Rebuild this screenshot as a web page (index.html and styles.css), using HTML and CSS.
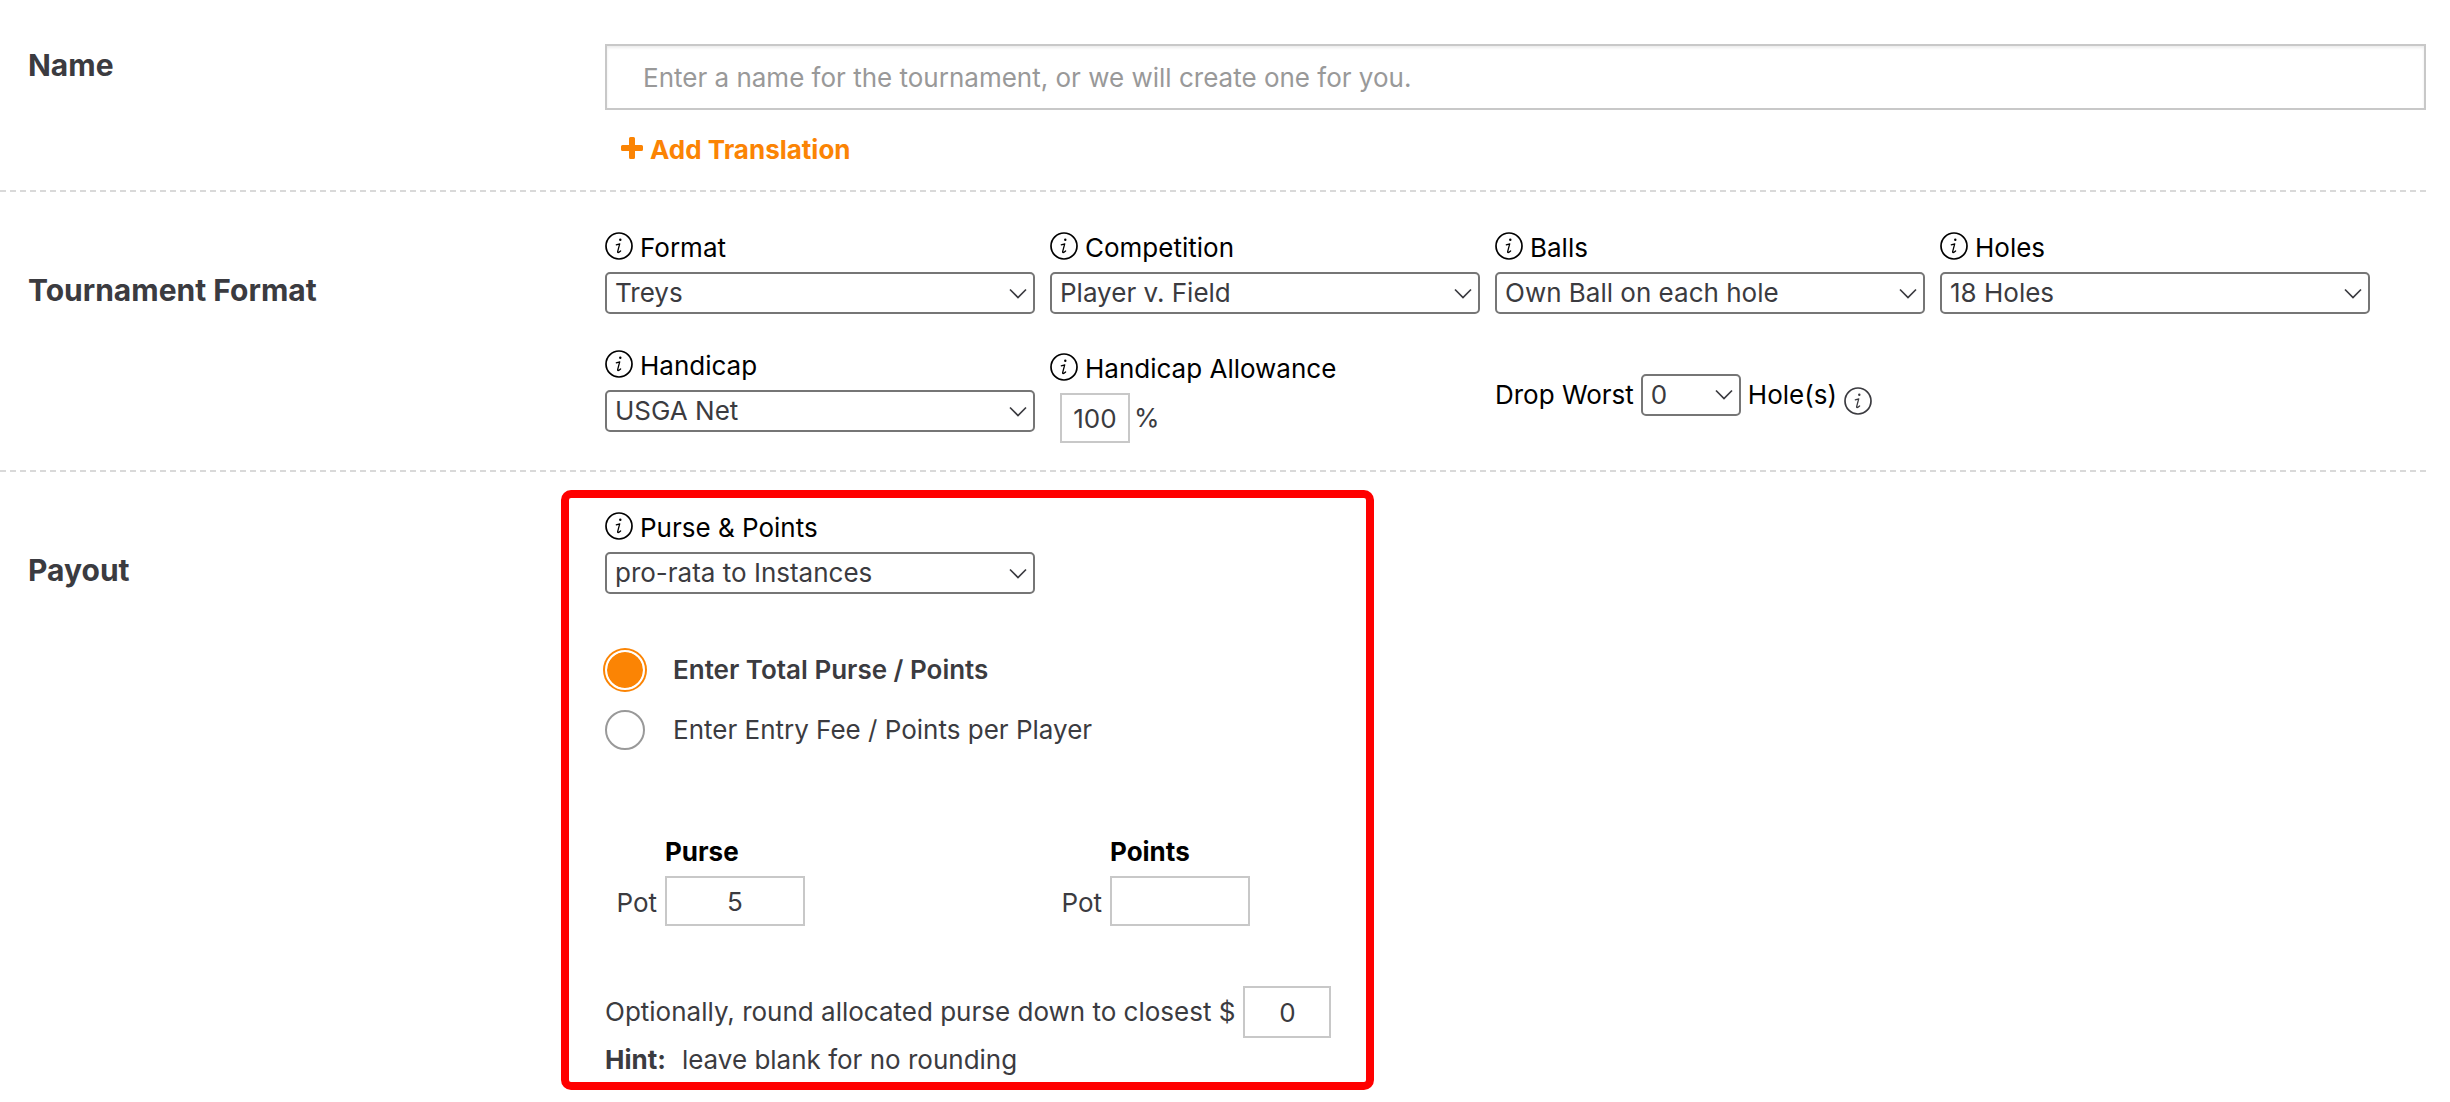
FILE: index.html
```
<!DOCTYPE html>
<html lang="en">
<head>
<meta charset="utf-8">
<meta name="viewport" content="width=device-width, initial-scale=1">
<title>Tournament setup</title>
<link rel="stylesheet" href="styles.css">
</head>
<body>
<svg class="sprite" aria-hidden="true">
  <symbol id="info" viewBox="0 0 28 28">
    <circle cx="14" cy="14" r="13" fill="none" stroke="currentColor" stroke-width="1.7"/>
    <circle cx="15.3" cy="7.8" r="1.2" fill="currentColor"/>
    <path d="M11.3 12.9C12.4 12.6 13.4 12.2 14.7 11.8L12.7 19.4C12.4 20.9 13.3 21 15.6 18.9" fill="none" stroke="currentColor" stroke-width="1.3" stroke-linecap="round" stroke-linejoin="round"/>
  </symbol>
</svg>
<form class="setup">
  <section class="section">
    <h2 class="section-title section-title-high"><label for="name">Name</label></h2>
    <div class="section-body name-body">
      <input class="input name-input" id="name" type="text" placeholder="Enter a name for the tournament, or we will create one for you.">
      <a class="add-link" href="#translation">
        <svg class="plus" viewBox="0 0 22 22" aria-hidden="true"><path d="M9.500 0h3a1.500 1.500 0 0 1 1.500 1.500V8h6.500A1.500 1.500 0 0 1 22 9.500v3a1.500 1.500 0 0 1-1.500 1.500H14v6.500a1.500 1.500 0 0 1-1.500 1.500h-3A1.500 1.500 0 0 1 8 20.500V14H1.500A1.500 1.500 0 0 1 0 12.500v-3A1.500 1.500 0 0 1 1.500 8H8V1.500A1.500 1.500 0 0 1 9.500 0z" fill="currentColor"/></svg>
        Add Translation
      </a>
    </div>
  </section>

  <section class="section">
    <h2 class="section-title">Tournament Format</h2>
    <div class="section-body fields">
      <div class="field">
        <label class="field-label" for="format"><svg class="info"><use href="#info"/></svg>Format</label>
        <select class="select" id="format"><option>Treys</option></select>
      </div>
      <div class="field">
        <label class="field-label" for="competition"><svg class="info"><use href="#info"/></svg>Competition</label>
        <select class="select" id="competition"><option>Player v. Field</option></select>
      </div>
      <div class="field">
        <label class="field-label" for="balls"><svg class="info"><use href="#info"/></svg>Balls</label>
        <select class="select" id="balls"><option>Own Ball on each hole</option></select>
      </div>
      <div class="field">
        <label class="field-label" for="holes"><svg class="info"><use href="#info"/></svg>Holes</label>
        <select class="select" id="holes"><option>18 Holes</option></select>
      </div>
      <div class="field">
        <label class="field-label" for="handicap"><svg class="info"><use href="#info"/></svg>Handicap</label>
        <select class="select" id="handicap"><option>USGA Net</option></select>
      </div>
      <div class="field field-low">
        <label class="field-label" for="allowance"><svg class="info"><use href="#info"/></svg>Handicap Allowance</label>
        <div class="percent"><input class="input percent-input" id="allowance" type="text" value="100">%</div>
      </div>
      <div class="drop">
        <label for="drop">Drop Worst</label>
        <select class="select drop-select" id="drop"><option>0</option></select>
        <span>Hole(s)</span>
        <svg class="info info-muted"><use href="#info"/></svg>
      </div>
    </div>
  </section>

  <section class="section">
    <h2 class="section-title">Payout</h2>
    <div class="payout">
      <div class="field payout-field">
        <label class="field-label" for="purse-points"><svg class="info"><use href="#info"/></svg>Purse &amp; Points</label>
        <select class="select" id="purse-points"><option>pro-rata to Instances</option></select>
      </div>
      <div class="choices">
        <label class="choice"><input class="radio" type="radio" name="entry" checked><span>Enter Total Purse / Points</span></label>
        <label class="choice"><input class="radio" type="radio" name="entry"><span>Enter Entry Fee / Points per Player</span></label>
      </div>
      <div class="pots">
        <div class="pot">
          <h3 class="pot-title">Purse</h3>
          <label class="pot-label" for="purse">Pot</label>
          <input class="input pot-input" id="purse" type="text" value="5">
        </div>
        <div class="pot">
          <h3 class="pot-title">Points</h3>
          <label class="pot-label" for="points">Pot</label>
          <input class="input pot-input" id="points" type="text">
        </div>
      </div>
      <div class="rounding">
        <label for="rounding">Optionally, round allocated purse down to closest $</label>
        <input class="input rounding-input" id="rounding" type="text" value="0">
      </div>
      <p class="hint"><strong class="hint-title">Hint:</strong><span>leave blank for no rounding</span></p>
    </div>
  </section>
</form>
</body>
</html>
```
FILE: styles.css
```
*, *::before, *::after { box-sizing: border-box; }

body {
  margin: 0;
  background: #fff;
  color: #3b3b40;
  font: 400 26px/32px Inter, Roboto, sans-serif;
}

h2, h3, p { margin: 0; }
input, select { margin: 0; font: inherit; color: inherit; }

.sprite { display: none; }

.setup { margin-right: 24px; }

/* Sections: heading column and body column */
.section {
  display: grid;
  grid-template-columns: 605px minmax(0, 1fr);
}
.section + .section { border-top: 2px dashed #d9d9d9; }
.section-title {
  padding: 80px 0 0 28px;
  font-size: 30px;
  line-height: 36px;
  font-weight: 700;
}
.section-title-high { padding-top: 47px; }

/* Text inputs */
.input {
  height: 50px;
  padding: 0;
  border: 2px solid #c8c8c8;
  border-radius: 0;
  background: #fff;
  text-align: center;
}
.name-body { padding: 44px 0 24px; }
.name-input {
  display: block;
  width: 100%;
  height: 66px;
  padding: 0 36px;
  box-shadow: inset 0 2px 3px #ececec;
  text-align: left;
}
.name-input::placeholder { color: #999; opacity: 1; }

.add-link {
  display: flex;
  width: max-content;
  margin: 24px 0 0 16px;
  gap: 7px;
  color: #fb8404;
  font-weight: 700;
  text-decoration: none;
}
.plus { width: 22px; height: 22px; margin-top: 3px; }

/* Labelled fields */
.fields {
  display: grid;
  grid-template-columns: repeat(4, minmax(0, 1fr));
  gap: 36px 15px;
  padding: 40px 56px 27px 0;
}
.field { display: flex; flex-direction: column; gap: 8px; }
.field-low { padding-top: 3px; }
.field-label { display: flex; gap: 7px; color: #000; }
.info { flex: none; width: 28px; height: 28px; }

.select {
  width: 100%;
  height: 42px;
  padding: 0 40px 0 8px;
  border: 2px solid #767676;
  border-radius: 5px;
  appearance: none;
  background: #fff url("data:image/svg+xml,%3Csvg xmlns='http://www.w3.org/2000/svg' width='18' height='11' viewBox='0 0 18 11'%3E%3Cpath d='M1 1.500 9 9.500l8-8' fill='none' stroke='%233b3b40' stroke-width='1.700'/%3E%3C/svg%3E") no-repeat right 6px center;
}

.percent { display: flex; align-items: center; gap: 4px; padding-left: 10px; }
.percent-input { width: 70px; }

.drop {
  display: flex;
  align-items: center;
  gap: 7px;
  padding-bottom: 4px;
  color: #000;
  white-space: nowrap;
}
.drop-select { width: 100px; color: #3b3b40; }
.info-muted { margin-top: 12px; color: #3b3b40; }

/* Payout panel, outlined in red */
.payout {
  max-width: 813px;
  margin: 18px 0 12px -44px;
  padding: 14px 30px 6px 36px;
  border: 8px solid #f00;
  border-radius: 10px;
}
.payout-field { max-width: 430px; }

.choices { display: grid; gap: 20px; margin-top: 56px; }
.choice { display: flex; align-items: center; gap: 28px; }
.radio {
  width: 40px;
  height: 40px;
  border: 2px solid #999;
  border-radius: 50%;
  appearance: none;
  background: #fff;
}
.radio:checked {
  border-color: #fff;
  background: #fb8404 padding-box;
  box-shadow: 0 0 0 2px #fb8404;
}
.radio:checked + span { font-weight: 600; }

.pots { display: flex; gap: 245px; margin-top: 86px; }
.pot { display: grid; grid-template-columns: 52px 140px; gap: 8px; align-items: center; }
.pot-title {
  grid-column: 2;
  color: #000;
  font-size: 26px;
  font-weight: 700;
}
.pot-label { padding-top: 4px; text-align: right; }
.pot-input { width: 100%; }

.rounding { display: flex; align-items: center; gap: 8px; margin-top: 60px; white-space: nowrap; }
.rounding-input { width: 88px; height: 52px; }

.hint { display: flex; gap: 16px; margin-top: 6px; }
.hint-title { font-weight: 700; }
```
